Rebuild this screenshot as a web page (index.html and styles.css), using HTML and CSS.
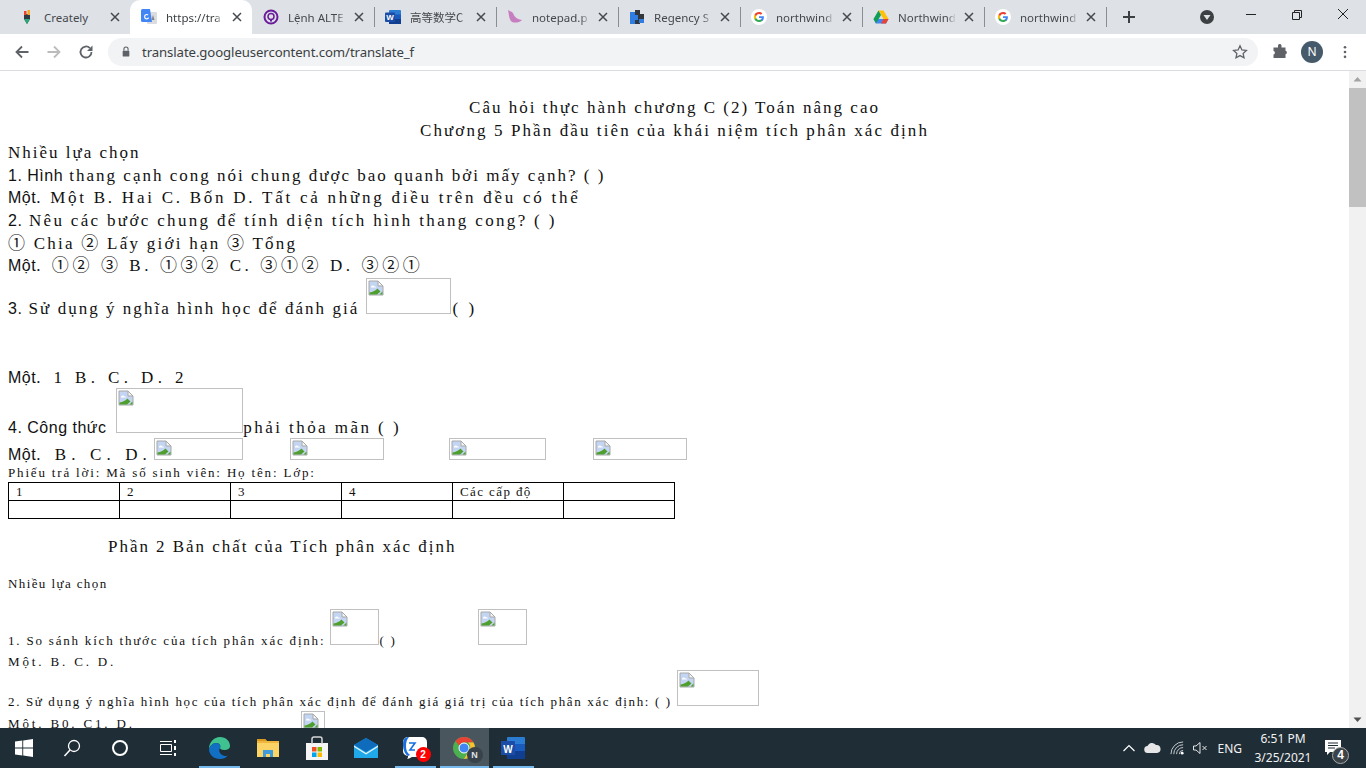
FILE: index.html
```html
<!DOCTYPE html>
<html lang="vi">
<head>
<meta charset="utf-8">
<title>translate</title>
<link rel="stylesheet" href="styles.css">
</head>
<body>
<svg class="defs" width="0" height="0" aria-hidden="true">
  <defs>
    <symbol id="g" viewBox="0 0 16 16">
      <circle cx="8" cy="8" r="8" fill="#fff"/>
      <path d="M12.9 8.2c0-.4 0-.7-.1-1H8v1.900h2.800c-.1.600-.5 1.200-1 1.500v1.300h1.600c1-.9 1.500-2.200 1.500-3.700z" fill="#4285f4"/>
      <path d="M8 13c1.300 0 2.500-.4 3.300-1.200l-1.600-1.300c-.4.300-1 .5-1.700.5-1.300 0-2.400-.9-2.800-2H3.500v1.300C4.300 12 6 13 8 13z" fill="#34a853"/>
      <path d="M5.200 9c-.2-.6-.2-1.300 0-2V5.700H3.500c-.7 1.400-.7 3.100 0 4.500L5.200 9z" fill="#fbbc05"/>
      <path d="M8 5c.7 0 1.400.3 1.900.8l1.500-1.500C10.500 3.500 9.300 3 8 3 6 3 4.300 4.100 3.500 5.700L5.200 7c.4-1.200 1.500-2 2.800-2z" fill="#ea4335"/>
    </symbol>
    <symbol id="x" viewBox="0 0 10 10">
      <path d="M1 1l8 8M9 1l-8 8" stroke="#45494d" stroke-width="1.500" fill="none"/>
    </symbol>
    <symbol id="bk" viewBox="0 0 16 16">
      <path d="M1 1h9l5 5v9H1z" fill="#c3d5f2" stroke="#a8a8a8"/>
      <path d="M3 6.500c1-1.500 2.500-1.500 3.500 0 1 0 1.500.5 1.500 1H3z" fill="#fff"/>
      <path d="M1.500 14.500v-2c3.500-.5 6-2 8-4l3 3-3.500 3z" fill="#4f9f2f"/>
      <path d="M11.500 14.500l3-3v3z" fill="#4f9f2f"/>
      <path d="M10 1v5h5z" fill="#f4f4f4" stroke="#a8a8a8"/>
    </symbol>
  </defs>
</svg>

<div class="app">
  <header class="tabstrip">
    <div class="tab">
      <svg class="fav" viewBox="0 0 16 16"><path d="M5 5h6v5l-3 5-3-5z" fill="#2d3b45"/><path d="M5 10h6l-3 5z" fill="#2aa876"/><rect x="5" y="2" width="2.500" height="4" fill="#e8452c"/><rect x="8.500" y="1" width="2.500" height="5" fill="#f7a823"/></svg>
      <span class="tab-label">Creately</span>
      <svg class="tab-x"><use href="#x"/></svg>
    </div>
    <div class="tab tab-active">
      <svg class="fav" viewBox="0 0 16 16"><rect x="6" y="3" width="10" height="12" rx="1" fill="#dadce0"/><path d="M12 6l-1.500 5h3z" fill="#80868b"/><path d="M1.500 0H9l2 13H1.500A1.500 1.500 0 0 1 0 11.500v-10A1.500 1.500 0 0 1 1.500 0z" fill="#4285f4"/><path d="M6 8.500h2c0 1.300-1 2-2.200 2a2.700 2.700 0 0 1 0-5.400c.7 0 1.300.2 1.700.7l-.8.700c-.2-.2-.5-.4-.9-.4a1.500 1.500 0 0 0 0 3.200c.7 0 1-.3 1.100-.8H6z" fill="#fff"/></svg>
      <span class="tab-label">https://tra</span>
      <svg class="tab-x"><use href="#x"/></svg>
    </div>
    <div class="tab tab-sep">
      <svg class="fav" viewBox="0 0 16 16"><circle cx="8" cy="8" r="6.500" fill="none" stroke="#6a1b9a" stroke-width="2"/><circle cx="8" cy="7.500" r="3" fill="none" stroke="#6a1b9a" stroke-width="1.500"/><path d="M7 10h2v2.500H7z" fill="#6a1b9a"/></svg>
      <span class="tab-label">Lệnh ALTE</span>
      <svg class="tab-x"><use href="#x"/></svg>
    </div>
    <div class="tab tab-sep">
      <svg class="fav" viewBox="0 0 16 16"><rect x="4" y="1" width="12" height="14" rx="1" fill="#2b7cd3"/><rect x="4" y="10" width="12" height="5" fill="#103f91"/><rect x="4" y="5.500" width="12" height="4.500" fill="#185abd"/><rect y="3.500" width="10" height="9.500" rx="1" fill="#1a4ca8"/><text class="fav-w" x="5" y="11" text-anchor="middle">W</text></svg>
      <span class="tab-label tab-cjk">高等数学C</span>
      <svg class="tab-x"><use href="#x"/></svg>
    </div>
    <div class="tab tab-sep">
      <svg class="fav" viewBox="0 0 16 16"><path d="M1 1c1 1 3 1 5 3 1 3 3 6 9 7-3 3-7 3-10 2C2 11 2 5 1 1z" fill="#c77ec0"/></svg>
      <span class="tab-label">notepad.p</span>
      <svg class="tab-x"><use href="#x"/></svg>
    </div>
    <div class="tab tab-sep">
      <svg class="fav" viewBox="0 0 16 16"><path d="M1 3h5v3h3v5H6v4H1z" fill="#2f7de1"/><path d="M6 1h5v4h4v5h-4v5H6v-4h3V6H6z" fill="#33363a"/><path d="M10 10h5v4h-5z" fill="#2f7de1"/></svg>
      <span class="tab-label">Regency S</span>
      <svg class="tab-x"><use href="#x"/></svg>
    </div>
    <div class="tab tab-sep">
      <svg class="fav"><use href="#g"/></svg>
      <span class="tab-label">northwind</span>
      <svg class="tab-x"><use href="#x"/></svg>
    </div>
    <div class="tab tab-sep">
      <svg class="fav" viewBox="0 0 16 16"><path d="M5.500 1.500h5l5 8.500h-5z" fill="#ffc107"/><path d="M.5 10h15L13 14.500H3z" fill="#4285f4"/><path d="M5.500 1.500L8 6 3 14.500.5 10z" fill="#0f9d58"/><path d="M10.500 10h5L13 14.500H8z" fill="#ea4335"/></svg>
      <span class="tab-label">Northwind</span>
      <svg class="tab-x"><use href="#x"/></svg>
    </div>
    <div class="tab tab-sep tab-last">
      <svg class="fav"><use href="#g"/></svg>
      <span class="tab-label">northwind</span>
      <svg class="tab-x"><use href="#x"/></svg>
    </div>
    <svg class="newtab" viewBox="0 0 14 14"><path d="M7 1v12M1 7h12" stroke="#3c4043" stroke-width="2" fill="none"/></svg>
    <div class="strip-right">
      <svg class="media" viewBox="0 0 16 16"><circle cx="8" cy="8" r="7" fill="#3c4043"/><path d="M4.500 6h7L8 11z" fill="#dee1e6"/></svg>
      <div class="winctl">
        <svg viewBox="0 0 46 30"><path d="M18 14.500h10" stroke="#222" fill="none"/></svg>
        <svg viewBox="0 0 46 30"><path d="M18.500 12.500h7v7h-7zM20.500 12.500v-2h7v7h-2" stroke="#222" fill="none"/></svg>
        <svg viewBox="0 0 46 30"><path d="M18 9l10 10M28 9L18 19" stroke="#222" fill="none"/></svg>
      </div>
    </div>
  </header>

  <nav class="toolbar">
    <svg class="tb" viewBox="0 0 16 16"><path d="M14.500 8H2.500M8 2.500L2.500 8 8 13.500" stroke="#5f6368" stroke-width="1.800" fill="none"/></svg>
    <svg class="tb" viewBox="0 0 16 16"><path d="M1.500 8h12M8 2.500L13.500 8 8 13.500" stroke="#babcbe" stroke-width="1.800" fill="none"/></svg>
    <svg class="tb" viewBox="0 0 16 16"><path d="M13.500 8a5.500 5.500 0 1 1-1.600-3.900" stroke="#5f6368" stroke-width="1.800" fill="none"/><path d="M14.500 1.500v5.500H9z" fill="#5f6368"/></svg>
    <div class="omnibox">
      <svg class="lock" viewBox="0 0 12 14"><path d="M3.500 6V4a2.500 2.500 0 0 1 5 0v2" stroke="#5f6368" stroke-width="1.300" fill="none"/><rect x="2" y="6" width="8" height="7" rx="1" fill="#5f6368"/></svg>
      <span class="url">translate.googleusercontent.com/translate_f</span>
      <svg class="star" viewBox="0 0 16 16"><path d="M8 1.800l1.900 4.100 4.500.5-3.300 3 .9 4.400L8 11.600l-4 2.200.9-4.400-3.300-3 4.500-.5z" stroke="#5f6368" stroke-width="1.300" fill="none"/></svg>
    </div>
    <svg class="ext" viewBox="0 0 16 16"><path d="M6 1.500a1.800 1.800 0 0 1 3.500 0V3.500h4v3.300a1.800 1.800 0 0 1 0 3.500v3.700H1.500V10.500a1.800 1.800 0 0 0 0-3.500V3.500H6z" fill="#5f6368"/></svg>
    <div class="avatar">N</div>
    <svg class="dots" viewBox="0 0 4 16"><circle cx="2" cy="2.500" r="1.500" fill="#5f6368"/><circle cx="2" cy="8" r="1.500" fill="#5f6368"/><circle cx="2" cy="13.500" r="1.500" fill="#5f6368"/></svg>
  </nav>

  <main class="viewport">
    <div class="page">
      <p class="ln center l1">Câu hỏi thực hành chương C (2) Toán nâng cao</p>
      <p class="ln center">Chương 5 Phần đầu tiên của khái niệm tích phân xác định</p>
      <p class="ln l3">Nhiều lựa chọn</p>
      <p class="ln l4"><span class="sans">1. Hình</span> thang cạnh cong nói chung được bao quanh bởi mấy cạnh? ( )</p>
      <p class="ln l5"><span class="sans">Một</span>. Một B. Hai C. Bốn D. Tất cả những điều trên đều có thể</p>
      <p class="ln l6"><span class="sans">2.</span> Nêu các bước chung để tính diện tích hình thang cong? ( )</p>
      <p class="ln l7">① Chia ② Lấy giới hạn ③ Tổng</p>
      <p class="ln l8"><span class="sans">Một</span>. ①② ③ B. ①③② C. ③①② D. ③②①</p>
      <p class="ln q3"><span class="sans">3.</span> Sử dụng ý nghĩa hình học để đánh giá <span class="bi w85 h36"><svg><use href="#bk"/></svg></span><span class="paren">( )</span></p>
      <p class="ln a3"><span class="sans">Một</span>. 1 B. C. D. 2</p>
      <p class="ln q4"><span class="sans">4. Công thức</span> <span class="bi w127 h45 ml3"><svg><use href="#bk"/></svg></span>phải thỏa mãn ( )</p>
      <p class="ln a4"><span class="sans">Một</span>. B. C. D.<span class="bi w89 h22 ml2"><svg><use href="#bk"/></svg></span><span class="bi w94 h22 ml47"><svg><use href="#bk"/></svg></span><span class="bi w97 h22 ml65"><svg><use href="#bk"/></svg></span><span class="bi w94 h22 ml47"><svg><use href="#bk"/></svg></span></p>
      <p class="sm sheet">Phiếu trả lời: Mã số sinh viên: Họ tên: Lớp:</p>
      <table class="answers">
        <tr><td>1</td><td>2</td><td>3</td><td>4</td><td>Các cấp độ</td><td></td></tr>
        <tr><td></td><td></td><td></td><td></td><td></td><td></td></tr>
      </table>
      <p class="ln part2">Phần 2 Bản chất của Tích phân xác định</p>
      <p class="sm mc2">Nhiều lựa chọn</p>
      <p class="sm q21">1. So sánh kích thước của tích phân xác định: <span class="bi w49 h36"><svg><use href="#bk"/></svg></span>( )<span class="bi w49 h36 ml81"><svg><use href="#bk"/></svg></span></p>
      <p class="sm a21">Một. B. C. D.</p>
      <p class="sm q22">2. Sử dụng ý nghĩa hình học của tích phân xác định để đánh giá giá trị của tích phân xác định: ( ) <span class="bi w82 h36"><svg><use href="#bk"/></svg></span></p>
      <p class="sm a22">Một. B0. C1. D.<span class="bi w24 h36 ml166 vt"><svg><use href="#bk"/></svg></span></p>
    </div>
    <aside class="scrollbar">
      <svg class="sb-arrow" viewBox="0 0 17 17"><path d="M4.500 10.500h8L8.500 6z" fill="#a3a3a3"/></svg>
      <div class="sb-thumb"></div>
      <svg class="sb-arrow sb-end" viewBox="0 0 17 17"><path d="M4.500 6.500h8L8.500 11z" fill="#505050"/></svg>
    </aside>
  </main>

  <footer class="taskbar">
    <div class="tk"><svg class="ti" viewBox="0 0 18 18"><path d="M0 2.500l7.300-1v7H0zM8.200 1.400L18 0v8.500H8.200zM0 9.500h7.300v7l-7.300-1zM8.200 9.500H18V18l-9.800-1.400z" fill="#fff"/></svg></div>
    <div class="tk"><svg class="ti" viewBox="0 0 18 18"><circle cx="11" cy="7" r="5.500" stroke="#fff" stroke-width="1.300" fill="none"/><path d="M7 11l-5.500 6" stroke="#fff" stroke-width="1.500"/></svg></div>
    <div class="tk"><svg class="ti" viewBox="0 0 18 18"><circle cx="9" cy="9" r="7" stroke="#fff" stroke-width="2" fill="none"/></svg></div>
    <div class="tk"><svg class="ti" viewBox="0 0 18 18"><path d="M1 2.500h12M1 15.500h12M1.500 5.500h11v7h-11z" stroke="#fff" fill="none"/><path d="M15 1h2v3h-2zM15 7h2v4h-2zM15 14h2v3h-2z" fill="#fff"/></svg></div>
    <div class="tk tk2 first2"><svg class="ti24" viewBox="0 0 24 24"><path d="M2 13C2 6 7 1 13 1c6 0 10 4 10 9 0 3-3 4-6 4-2 0-4-1-4-2 1-2 0-5-4-5-3 0-6 3-7 6z" fill="#3fc28f"/><path d="M2 13c1-3 4-6 7-6 4 0 5 3 4 5-2 3 0 7 5 8 1 0 2 0 3-1-2 3-5 4-8 4C7 23 2 19 2 13z" fill="#1170c4"/></svg></div>
    <div class="tk tk2"><svg class="ti24" viewBox="0 0 24 24"><path d="M1 3h8l2 2h12v16H1z" fill="#f0b73e"/><path d="M1 3h8l2 2H1z" fill="#d99a1f"/><path d="M1 7h22v14H1z" fill="#fbd465"/><path d="M7 14h10v7h-3v-3h-4v3H7z" fill="#3f9bd9"/></svg></div>
    <div class="tk tk2"><svg class="ti24" viewBox="0 0 24 24"><path d="M1 7h22v17H1z" fill="#f5f5f5"/><path d="M7 8V3a2 2 0 0 1 2-2h6a2 2 0 0 1 2 2v5" stroke="#d6d6d6" stroke-width="1.500" fill="none"/><rect x="7" y="11" width="4.500" height="4.500" fill="#f25022"/><rect x="12.500" y="11" width="4.500" height="4.500" fill="#7fba00"/><rect x="7" y="16.500" width="4.500" height="4.500" fill="#00a4ef"/><rect x="12.500" y="16.500" width="4.500" height="4.500" fill="#ffb900"/></svg></div>
    <div class="tk tk2"><svg class="ti24" viewBox="0 0 24 24"><path d="M0 9l12-7 12 7v13H0z" fill="#1fa8ea"/><path d="M0 9l12-7 12 7-12 7z" fill="#0f6cbd"/><path d="M0 9.500l12 7.500 12-7.500v1.500L12 18.500 0 11z" fill="#e8f4fc"/></svg></div>
    <div class="tk tk2 zoomi">
      <svg class="ti24" viewBox="0 0 24 24"><path d="M6 1h13a5 5 0 0 1 5 5v10a5 5 0 0 1-5 5H9c-2 1-4 2-5 2 1-1 1-2 1-3a5 5 0 0 1-5-5V6a5 5 0 0 1 5-5z" fill="#fff"/><path d="M0 8c0-5 2-7 6-7-2 2-3 5-3 9s1 7 4 9l-2 1c-3-2-5-6-5-12z" fill="#1a6fe0"/><path d="M6 7h6l-5 7h5" stroke="#1a6fe0" stroke-width="1.600" fill="none"/></svg>
      <span class="badge">2</span>
    </div>
    <div class="tk tk2 active">
      <svg class="ti24" viewBox="0 0 24 24"><circle cx="12" cy="12" r="11" fill="#4caf50"/><path d="M12 1a11 11 0 0 1 9.500 5.500H12a5.500 5.500 0 0 0-5 3.300L3.500 5A11 11 0 0 1 12 1z" fill="#ea4335"/><path d="M21.500 6.500A11 11 0 0 1 12 23l5-8.500a5.500 5.500 0 0 0-1-8z" fill="#fbc02d"/><circle cx="12" cy="12" r="5" fill="#4285f4" stroke="#fff"/></svg>
      <span class="profile">N</span>
    </div>
    <div class="tk tk2 run"><svg class="ti24" viewBox="0 0 24 24"><rect x="6" y="1" width="18" height="22" rx="1" fill="#2b7cd3"/><rect x="6" y="8" width="18" height="7" fill="#185abd"/><rect x="6" y="15" width="18" height="8" fill="#103f91"/><rect y="5" width="14" height="14" rx="1" fill="#1a4ca8"/><text class="tw" x="7" y="16.500" text-anchor="middle">W</text></svg></div>
    <div class="tray">
      <svg class="tr chev" viewBox="0 0 14 14"><path d="M1.500 10L7 4.500 12.500 10" stroke="#fff" stroke-width="1.200" fill="none"/></svg>
      <svg class="tr cloud" viewBox="0 0 18 12"><path d="M5 11a3.500 3.500 0 0 1-.5-7A5 5 0 0 1 13 3a4 4 0 0 1 1 8z" fill="#e6e6e6"/></svg>
      <svg class="tr wifi" viewBox="0 0 16 16"><path d="M1 14A13 13 0 0 1 14 1M4 14A10 10 0 0 1 14 4M7 14a7 7 0 0 1 7-7M10 14a4 4 0 0 1 4-4" stroke="#cfd4d7" fill="none"/><circle cx="13" cy="13" r="1.500" fill="#fff"/></svg>
      <svg class="tr vol" viewBox="0 0 16 16"><path d="M1.500 6v4h2.500l4 3.500v-11L4 6z" stroke="#e6e6e6" fill="none"/><path d="M10.500 6l4 4M14.500 6l-4 4" stroke="#e6e6e6" fill="none"/></svg>
      <span class="lang">ENG</span>
      <div class="clock"><span>6:51 PM</span><span>3/25/2021</span></div>
      <div class="notif">
        <svg class="notif-i" viewBox="0 0 16 15"><path d="M0 0h16v12H5l-3 3v-3H0z" fill="#fff"/><path d="M3 3h10M3 5.500h10M3 8h7" stroke="#1e2c36"/></svg>
        <span class="notif-n">4</span>
      </div>
    </div>
  </footer>
</div>
</body>
</html>
```

FILE: styles.css
```css
* { box-sizing: border-box; }
html, body { margin: 0; padding: 0; height: 100%; overflow: hidden; }
body { font-family: "Noto Sans", "Liberation Sans", sans-serif; background: #fff; }
.defs { display: block; height: 0; }
.app { width: 1366px; height: 768px; display: flex; flex-direction: column; }

/* Tab strip */
.tabstrip { height: 34px; flex: none; background: #dee1e6; display: flex; padding-left: 8px; align-items: stretch; }
.tab { width: 122px; flex: none; display: flex; align-items: center; padding-left: 11px; font-size: 11.500px; color: #45494d; border-radius: 10px 10px 0 0; position: relative; }
.tab-sep::after { content: ""; position: absolute; right: -1px; top: 7px; width: 1px; height: 20px; background: #8a8d91; }
.tab-active { background: #fff; color: #3c4043; }
.fav { width: 16px; height: 16px; flex: none; }
.fav-w { font: 700 8px "Liberation Sans", sans-serif; fill: #fff; }
.tab-label { width: 58px; margin-left: 9px; white-space: nowrap; overflow: hidden; -webkit-mask-image: linear-gradient(90deg, #000 84%, transparent 100%); mask-image: linear-gradient(90deg, #000 84%, transparent 100%); }
.tab:first-child .tab-label { -webkit-mask-image: none; mask-image: none; }
.tab-cjk { font-family: "Noto Sans CJK SC", "Noto Sans", sans-serif; }
.tab-x { width: 10px; height: 10px; margin-left: 8px; flex: none; }
.newtab { width: 14px; height: 14px; align-self: center; margin-left: 16px; flex: none; }
.strip-right { margin-left: auto; display: flex; align-items: flex-start; }
.media { width: 16px; height: 16px; margin: 9px 13px 0 0; flex: none; }
.winctl { display: flex; }
.winctl svg { width: 46px; height: 30px; display: block; }

/* Toolbar */
.toolbar { height: 37px; flex: none; background: #fff; border-bottom: 1px solid #dadce0; display: flex; align-items: center; padding: 0 0 1px 14px; }
.tb { width: 16px; height: 16px; margin-right: 16px; flex: none; }
.omnibox { margin-left: -2px; width: 1150px; height: 28px; background: #f1f3f4; border-radius: 14px; display: flex; align-items: center; padding: 0 10px 0 13px; }
.lock { width: 10px; height: 13px; flex: none; }
.url { margin-left: 11px; font-size: 13.200px; color: #3c4043; letter-spacing: -.1px; }
.star { width: 16px; height: 16px; margin-left: auto; }
.ext { width: 16px; height: 16px; margin-left: 14px; flex: none; }
.avatar { width: 22px; height: 22px; margin-left: 13px; border-radius: 50%; background: #455a6b; color: #fff; font-size: 12px; display: flex; align-items: center; justify-content: center; flex: none; }
.dots { width: 4px; height: 14px; margin-left: 20px; flex: none; }

/* Page */
.viewport { flex: 1; min-height: 0; display: flex; overflow: hidden; background: #fff; }
.page { flex: 1; min-width: 0; height: 657px; overflow: hidden; padding: 26px 0 0 8px; font-family: "Liberation Serif", "Noto Sans CJK SC", serif; color: #111; }
.page p { margin: 0; white-space: nowrap; }
.page .ln { font-size: 17px; line-height: 22.600px; height: 22.600px; letter-spacing: 2.100px; }
.page .center { text-align: center; padding-right: 8px; }
.page .l1, .page .l3, .page .l4 { letter-spacing: 2px; }
.page .l5 { letter-spacing: 2.750px; }
.page .l6 { letter-spacing: 2.330px; }
.page .l7 { letter-spacing: 2.250px; }
.page .l8 { letter-spacing: 3.600px; }
.sans { font-family: "Liberation Sans", sans-serif; font-size: 16px; letter-spacing: .5px; }
.page .sm { font-size: 13px; line-height: 18px; letter-spacing: 1.400px; }
.bi { display: inline-block; overflow: hidden; border: 1px solid #c0c0c0; padding: 1px 0 0 1px; letter-spacing: 0; }
.bi svg { width: 16px; height: 16px; display: block; }
.paren { margin-left: 2px; letter-spacing: 3px; }
.w85 { width: 85px; } .w127 { width: 127px; } .w89 { width: 89px; } .w94 { width: 94px; } .w97 { width: 97px; }
.w49 { width: 49px; } .w82 { width: 82px; } .w24 { width: 24px; }
.h36 { height: 36px; } .h45 { height: 45px; } .h22 { height: 22px; }
.ml2 { margin-left: 2px; } .ml3 { margin-left: 3px; } .ml47 { margin-left: 47px; } .ml65 { margin-left: 65px; } .ml81 { margin-left: 81px; } .ml166 { margin-left: 166px; }
.vt { vertical-align: top; margin-top: -4px; }
.page .q3 { height: auto; line-height: 22px; letter-spacing: 2.030px; }
.page .a3 { margin-top: 47px; letter-spacing: 4.400px; }
.page .q4 { height: auto; margin-top: -1.600px; letter-spacing: 2.450px; }
.page .a4 { height: auto; line-height: 22px; margin-top: -1px; letter-spacing: 5.100px; }
.page .sheet { margin-top: -2px; letter-spacing: 1.830px; }
.answers { border-collapse: collapse; table-layout: fixed; width: 667px; font-size: 13px; }
.answers td { border: 1px solid #000; height: 18px; padding: 0 0 0 7px; line-height: 16px; letter-spacing: 1.400px; }
.page .part2 { margin: 17px 0 0 100px; letter-spacing: 1.970px; }
.page .mc2 { margin-top: 16px; }
.page .q21 { margin-top: 16px; letter-spacing: 1.800px; }
.page .a21 { margin-top: 3px; letter-spacing: 2.850px; }
.page .q22 { margin-top: -1px; letter-spacing: 1.640px; }
.page .a22 { margin-top: 4px; letter-spacing: 2.850px; }

/* Scrollbar */
.scrollbar { width: 17px; flex: none; background: #f1f1f1; display: flex; flex-direction: column; }
.sb-arrow { width: 17px; height: 17px; flex: none; }
.sb-thumb { height: 119px; background: #c1c1c1; }
.sb-end { margin-top: auto; }

/* Taskbar */
.taskbar { height: 40px; flex: none; background: #1f2d36; display: flex; align-items: stretch; position: relative; }
.tk { width: 48px; flex: none; display: flex; align-items: center; justify-content: center; position: relative; }
.tk2 { width: 49px; }
.first2 { margin-left: 2.500px; }
.first2::after, .zoomi::after, .active::after, .run::after { content: ""; position: absolute; bottom: 0; height: 2px; left: 4px; right: 4px; background: #76b9ed; }
.active { background: #4a565e; }
.active::after { left: 0; right: 0; }
.ti { width: 18px; height: 18px; }
.ti24 { width: 24px; height: 24px; }
.tw { font: 700 10px "Liberation Sans", sans-serif; fill: #fff; }
.badge { position: absolute; right: 9px; bottom: 6px; width: 15px; height: 15px; border-radius: 50%; background: #f00; color: #fff; font: 700 10px/15px "Liberation Sans", sans-serif; text-align: center; }
.profile { position: absolute; left: 27px; top: 19px; width: 16px; height: 16px; border-radius: 50%; background: #38424a; color: #dfe3e6; font: 700 9px/16px "Liberation Sans", sans-serif; text-align: center; }
.tray { margin-left: auto; display: flex; align-items: center; color: #fff; }
.tr { flex: none; }
.chev { width: 14px; height: 14px; margin-right: 7px; }
.cloud { width: 18px; height: 12px; margin-right: 9px; }
.wifi { width: 15px; height: 15px; margin-right: 7px; }
.vol { width: 16px; height: 16px; margin-right: 9px; }
.lang { font-size: 12px; margin-right: 4px; color: #f2f2f2; }
.clock { display: flex; flex-direction: column; align-items: center; font-size: 12px; line-height: 19px; width: 74px; color: #f2f2f2; }
.notif { position: relative; width: 46px; height: 40px; }
.notif-i { position: absolute; left: 5px; top: 12px; width: 16px; height: 15px; }
.notif-n { position: absolute; left: 12px; top: 19px; width: 17px; height: 17px; border-radius: 50%; background: #3b4349; border: 1px solid #aaa; color: #fff; font: 700 12px/15px "Liberation Sans", sans-serif; text-align: center; }
```
